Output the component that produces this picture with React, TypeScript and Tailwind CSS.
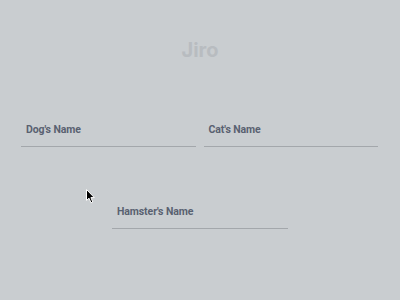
import React from 'react';

const Field: React.FC<{ label: string; className?: string }> = ({ label, className = '' }) => (
  <label className={`flex flex-col ${className}`}>
    <span className="pl-[5px] pt-[1px] font-['Roboto',sans-serif] text-[10.5px] font-bold leading-[14px] tracking-[-0.1px] text-[#596170]">
      {label}
    </span>
    <input className="mt-[9px] h-[1px] w-full border-0 border-b border-[#a3a7ab] bg-transparent outline-none" />
  </label>
);

const App: React.FC = () => {
  return (
    <div
      className="relative h-[300px] w-[400px] overflow-hidden bg-[#c9cdd0]"
      style={{ fontFamily: 'Inter, "Liberation Sans", sans-serif' }}
    >
      <h1 className="pt-[38px] text-center text-[20px] font-bold leading-[24px] text-[#b8bcc0]">Jiro</h1>

      <div className="mt-[60px] flex gap-[8px] pl-[21px] pr-[22px]">
        <Field label="Dog's Name" className="flex-1" />
        <Field label="Cat's Name" className="flex-1" />
      </div>

      <div className="mt-[57px] flex justify-center">
        <Field label="Hamster's Name" className="w-[176px]" />
      </div>

      {/* mouse pointer */}
      <svg className="absolute left-[86px] top-[189px]" width="10" height="15" viewBox="0 0 10 15">
        <path d="M0.5 0.5 L0.5 11.5 L3 9.2 L5 13.8 L6.8 13 L4.9 8.6 L8.3 8.6 Z" fill="#000" stroke="#fff" strokeWidth="1" />
      </svg>
    </div>
  );
};

export default App;
